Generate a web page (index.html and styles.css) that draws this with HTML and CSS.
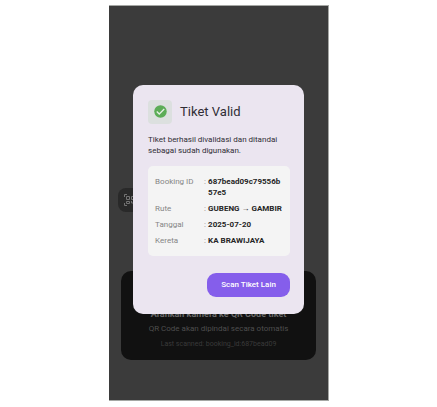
FILE: index.html
```html
<!DOCTYPE html>
<html lang="id">
<head>
<meta charset="utf-8">
<meta name="viewport" content="width=device-width, initial-scale=1">
<title>Tiket Valid</title>
<link rel="stylesheet" href="styles.css">
</head>
<body>
<main class="phone">
  <div class="scanner">
    <div class="chip">
      <svg class="chip-icon" viewBox="0 0 12 12" aria-hidden="true">
        <path d="M.5 3V.5H3M.5 9v2.500H3M9 .5h2.500V3M9 11.500h2.500V9M2.500 2.500h3v3h-3zM7.500 2.500h3v3h-3zM2.500 7.500h3v2h-3zM7.500 7v2h2" fill="none" stroke="currentColor"/>
      </svg>
    </div>
    <section class="hint">
      <h2 class="hint-title">Arahkan kamera ke QR Code tiket</h2>
      <p class="hint-text">QR Code akan dipindai secara otomatis</p>
      <p class="hint-last">Last scanned: booking_id:687bead09</p>
    </section>
  </div>
  <div class="overlay">
    <section class="dialog" role="dialog" aria-labelledby="dialog-title">
      <header class="dialog-head">
        <span class="badge">
          <svg class="badge-icon" viewBox="0 0 24 24" aria-hidden="true">
            <circle cx="12" cy="12" r="10" fill="#5cad57"/>
            <path fill="none" stroke="#e6f0e5" stroke-width="2" d="M6 12l4 4 8-8"/>
          </svg>
        </span>
        <h1 class="title" id="dialog-title">Tiket Valid</h1>
      </header>
      <p class="message">Tiket berhasil divalidasi dan ditandai sebagai sudah digunakan.</p>
      <dl class="details">
        <div class="row"><dt>Booking ID</dt><dd>687bead09c79556b57e5</dd></div>
        <div class="row"><dt>Rute</dt><dd>GUBENG → GAMBIR</dd></div>
        <div class="row"><dt>Tanggal</dt><dd>2025-07-20</dd></div>
        <div class="row"><dt>Kereta</dt><dd>KA BRAWIJAYA</dd></div>
      </dl>
      <button class="action" type="button">Scan Tiket Lain</button>
    </section>
  </div>
</main>
</body>
</html>
```
FILE: styles.css
```css
* {
  box-sizing: border-box;
  margin: 0;
}

body {
  min-height: 100vh;
  padding: 5px 0 6px 1px;
  display: flex;
  justify-content: center;
  background: #fff;
  font: 8px/11px Roboto, sans-serif;
  color: #302d35;
}

.phone {
  position: relative;
  width: 50.3vw;
  display: flex;
  background: #3b3b3b;
  border: 1px solid #a5a7a4;
  border-left: 0;
}

.scanner {
  flex: 1;
  display: flex;
  flex-direction: column;
  justify-content: flex-end;
  gap: 59px;
  padding: 0 12px 40px;
}

.chip {
  align-self: flex-start;
  width: 60px;
  height: 24px;
  margin-left: -3px;
  padding: 6px;
  border-radius: 8px;
  background: #292929;
  color: #727272;
}

.chip-icon {
  display: block;
  width: 12px;
  height: 12px;
}

.hint {
  padding: 37px 8px 10px;
  border-radius: 10px;
  background: #111;
  text-align: center;
  white-space: nowrap;
}

.hint-title {
  font-size: 9px;
  line-height: 13px;
  font-weight: 700;
  color: #696969;
}

.hint-text {
  margin-top: 2px;
  color: #4e4e4e;
}

.hint-last {
  margin-top: 5px;
  font-size: 7px;
  color: #3a3a3a;
}

.overlay {
  position: absolute;
  inset: 0 24px;
  display: flex;
  flex-direction: column;
  justify-content: center;
}

.dialog {
  display: flex;
  flex-direction: column;
  margin-bottom: 8px;
  padding: 15px 14px 17px 15px;
  border-radius: 10px;
  background: #ebe5f0;
}

.dialog-head {
  display: flex;
  align-items: center;
  gap: 8px;
}

.badge {
  display: grid;
  place-items: center;
  width: 24px;
  height: 24px;
  border-radius: 4px;
  background: #dce0df;
}

.badge-icon {
  width: 15px;
  height: 15px;
}

.title {
  font-size: 13px;
  line-height: 20px;
  font-weight: 400;
}

.message {
  margin-top: 10px;
}

.details {
  display: grid;
  gap: 5px;
  margin-top: 10px;
  padding: 10px 7px;
  border-radius: 5px;
  background: #f4f4f4;
}

.row {
  display: grid;
  grid-template-columns: 49px 1fr;
}

.row dt {
  color: #858585;
}

.row dd {
  position: relative;
  padding-left: 4px;
  font-weight: 700;
  color: #252525;
  overflow-wrap: anywhere;
}

.row dd::before {
  content: ":";
  position: absolute;
  left: 0;
  font-weight: 400;
  color: #858585;
}

.action {
  align-self: flex-end;
  height: 24px;
  margin-top: 17px;
  padding: 0 14px;
  border: 0;
  border-radius: 9px;
  background: #855eeb;
  color: #fff;
  font: 500 8px/11px Roboto, sans-serif;
}
```
